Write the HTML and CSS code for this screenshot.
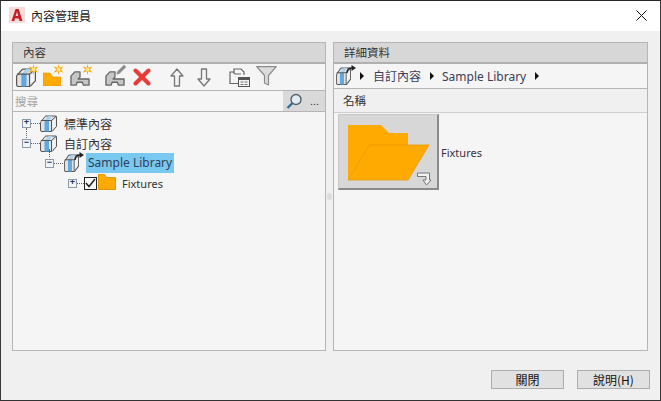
FILE: index.html
```html
<!DOCTYPE html>
<html lang="zh-Hant">
<head>
<meta charset="utf-8">
<title>內容管理員</title>
<link rel="stylesheet" href="styles.css">
</head>
<body>
<svg class="defs" width="0" height="0" aria-hidden="true">
  <symbol id="cube" viewBox="0 0 17 17" preserveAspectRatio="none">
    <path d="M1.500 6 5 1.500Q5.500 1 6 1h9.500q1 0 1 1v9.500L12.500 16q-.5.500-1 .5H2q-1.500 0-1.500-1.500V7.500q0-1 1-1.500z" fill="#e2e2e2" stroke="#555" stroke-width="1"/>
    <path d="M4.500 5.500 8.500 1h4L8.500 5.500z" fill="#a9d2ee"/>
    <path d="M4.500 5.500h4.500v11H4.500z" fill="#5fa8e0"/>
    <path d="M.8 5.500H11.500V16M11.500 5.500 16.200 1.300" fill="none" stroke="#555" stroke-width="1"/>
    <path d="M12.500 6.500 15.500 3.500v7.500l-3 3z" fill="#f4f4f4"/>
  </symbol>
  <symbol id="star" viewBox="0 0 12 12">
    <path d="M6 0 7 4 11.500 2.500 8.500 6 11.500 9.500 7 8 6 12 5 8 .5 9.500 3.500 6 .5 2.500 5 4z" fill="#f9a80c"/>
    <circle cx="6" cy="6" r="2.200" fill="#ffe27a"/>
  </symbol>
  <symbol id="lib" viewBox="0 0 21 16" preserveAspectRatio="none">
    <path d="M1 15V5.500L5 1h5.500v5.500L8.500 8.500H20V15h-6l-1-3H7.500l-1 3z" fill="#c6c6c6" stroke="#666" stroke-width="1.400" stroke-linejoin="round"/>
  </symbol>
</svg>
<div class="window">
  <header class="titlebar">
    <svg class="app-logo" viewBox="0 0 16 16" width="16" height="16" aria-hidden="true">
      <rect width="16" height="16" fill="#f6dcd8"/>
      <path d="M2.500 14 6.500 2h3.200l3.800 12h-3l-.7-2.500H6L5.300 14zM6.700 9h2.500L8 4.800z" fill="#c4202c" fill-rule="evenodd"/>
    </svg>
    <span class="title-text">內容管理員</span>
    <svg class="close-x" viewBox="0 0 11 11" width="11" height="11" aria-hidden="true">
      <path d="M.5.500l10 10M10.500.500l-10 10" stroke="#111" stroke-width="1"/>
    </svg>
  </header>

  <main class="content">
    <section class="panel panel-left">
      <h2 class="panel-head">內容</h2>
      <div class="toolbar">
        <span class="tool tool-cube"><svg width="20" height="19"><use href="#cube"/></svg><svg class="spark" width="11" height="11"><use href="#star"/></svg></span>
        <span class="tool tool-folder">
          <svg width="18" height="15" viewBox="0 0 18 15"><path d="M0 2h7l3 4h8v9H0z" fill="#ffaa00" stroke="#e09400" stroke-width=".6"/></svg><svg class="spark" width="11" height="11"><use href="#star"/></svg></span>
        <span class="tool tool-lib"><svg width="20" height="15"><use href="#lib"/></svg><svg class="spark" width="11" height="11"><use href="#star"/></svg></span>
        <span class="tool tool-edit"><svg width="20" height="15"><use href="#lib"/></svg><svg class="pencil" width="12" height="12" viewBox="0 0 12 12"><path d="M9 .5 11.500 3 4.500 10 1 11 2 7.500z" fill="#8a8a8a" stroke="#f3f3f3" stroke-width=".6"/></svg></span>
        <svg class="tool-del" width="18" height="18" viewBox="0 0 18 18"><path d="M2.500 2.500l13 13M15.500 2.500l-13 13" stroke="#ec3a36" stroke-width="4" stroke-linecap="round"/></svg>
        <svg class="tool-up" width="14" height="19" viewBox="0 0 14 19"><path d="M7 1 13 8H9.500v10h-5V8H1z" fill="#f3f3f3" stroke="#777" stroke-width="1.300" stroke-linejoin="round"/></svg>
        <svg class="tool-down" width="14" height="19" viewBox="0 0 14 19"><path d="M7 18 13 11H9.500V1h-5v10H1z" fill="#f3f3f3" stroke="#777" stroke-width="1.300" stroke-linejoin="round"/></svg>
        <svg class="tool-clip" width="21" height="20" viewBox="0 0 21 20"><path d="M1 17V5h4V2h7l3 3v3M1 5h3l2 2h6" fill="none" stroke="#666" stroke-width="1.200"/><path d="M1 16.500h8" stroke="#666"/><rect x="9.500" y="10.500" width="11" height="9" fill="#f3f3f3" stroke="#555"/><path d="M9.500 12h11" stroke="#555" stroke-width="2"/><path d="M11.500 15h7M11.500 17.500h7" stroke="#777" stroke-dasharray="3 1"/></svg>
        <svg class="tool-filter" width="21" height="20" viewBox="0 0 21 20"><path d="M.7.700h19.600L12.500 9.500v9.500l-4-2V9.500z" fill="#dcdcdc" stroke="#8a8a8a" stroke-width="1.200" stroke-linejoin="round"/></svg>
      </div>
      <div class="searchbar">
        <span class="search-label">搜尋</span>
        <span class="search-btns">
          <svg width="17" height="17" viewBox="0 0 17 17"><circle cx="10" cy="6.500" r="5" fill="#e4ecf2" stroke="#54606a" stroke-width="1.400"/><path d="M6.500 10 1.500 15" stroke="#2f6f9f" stroke-width="2.400"/></svg>
          <span class="dots">...</span>
        </span>
      </div>
      <div class="tree">
        <div class="row row-0 row-next">
          <span class="exp">+</span><span class="dash"></span>
          <svg class="node-ico" width="17" height="17"><use href="#cube"/></svg>
          <span class="label">標準內容</span>
        </div>
        <div class="row row-0 row-open">
          <span class="exp">−</span><span class="dash"></span>
          <svg class="node-ico" width="17" height="17"><use href="#cube"/></svg>
          <span class="label">自訂內容</span>
        </div>
        <div class="row row-1">
          <span class="exp">−</span><span class="dash"></span>
          <span class="lib-ico"><svg class="node-ico" width="15" height="18"><use href="#cube"/></svg><svg class="link-arrow" width="10" height="9" viewBox="0 0 10 9"><path d="M1 8C1 4 3 3 6 3" fill="none" stroke="#222" stroke-width="1.400"/><path d="M5.500 0 10 3 5.500 6z" fill="#222"/></svg></span>
          <span class="label label-sel">Sample Library</span>
        </div>
        <div class="row row-2">
          <span class="exp">+</span><span class="dash"></span>
          <span class="check"><svg width="11" height="10" viewBox="0 0 11 10"><path d="M1 5 4 8.500 10 1" fill="none" stroke="#222" stroke-width="1.500"/></svg></span>
          <svg class="fold-ico" width="18" height="16" viewBox="0 0 18 16"><path d="M.5.500h6l2 3h9v12H.5z" fill="#ffaa00" stroke="#e29600"/></svg>
          <span class="label label-fix">Fixtures</span>
        </div>
      </div>
    </section>

    <div class="splitter"><span class="grip"></span></div>

    <section class="panel panel-right">
      <h2 class="panel-head">詳細資料</h2>
      <nav class="crumbs">
        <span class="lib-ico crumb-ico"><svg class="node-ico" width="15" height="18"><use href="#cube"/></svg><svg class="link-arrow" width="10" height="9" viewBox="0 0 10 9"><path d="M1 8C1 4 3 3 6 3" fill="none" stroke="#222" stroke-width="1.400"/><path d="M5.500 0 10 3 5.500 6z" fill="#222"/></svg></span>
        <span class="tri"></span>
        <span class="crumb">自訂內容</span>
        <span class="tri"></span>
        <span class="crumb">Sample Library</span>
        <span class="tri"></span>
      </nav>
      <div class="col-head">名稱</div>
      <div class="items">
        <div class="thumb">
          <svg width="82" height="57" viewBox="0 0 82 57"><path d="M1 1h33l8 8h19v12H23L1 55.500z" fill="#ffaa00"/><path d="M22.500 21H82L61 56H1z" fill="#ffaa00" stroke="#e89a00" stroke-width=".8"/></svg>
          <svg class="shortcut" width="14" height="14" viewBox="0 0 14 14"><path d="M.5 1h12v7H14L9.500 13 6 8h3V4.500H.5z" fill="#f2f2f2" stroke="#777"/></svg>
        </div>
        <span class="item-name">Fixtures</span>
      </div>
    </section>
  </main>

  <footer class="footer">
    <button class="btn" type="button">關閉</button>
    <button class="btn" type="button">說明(H)</button>
  </footer>
</div>
</body>
</html>
```
FILE: styles.css
```css
* { box-sizing: border-box; }
html, body { margin: 0; padding: 0; }
body {
  width: 661px;
  height: 401px;
  overflow: hidden;
  background: #fff;
  font-family: "Noto Sans CJK TC", "Noto Sans", sans-serif;
  font-size: 12px;
  color: #333;
}
.defs { position: absolute; }
.window {
  width: 661px;
  height: 401px;
  display: flex;
  flex-direction: column;
  background: #f0f0f0;
  border-top: 1px solid #262626;
  border-left: 1px solid #3a3a3a;
  border-right: 1px solid #3a3a3a;
  border-bottom: 1px solid #333;
}
.titlebar {
  height: 30px;
  flex: none;
  background: #fff;
  display: flex;
  align-items: center;
  padding: 0 11px 1px 8px;
}
.app-logo { flex: none; margin-top: -1px; }
.title-text { margin-left: 6px; font-size: 12px; color: #222; }
.close-x { margin-left: auto; margin-right: 2px; }

.content {
  flex: none;
  height: 320px;
  display: flex;
  padding: 11px 12px 0 11px;
}
.panel {
  height: 309px;
  display: flex;
  flex-direction: column;
  background: #f5f5f5;
  border: 1px solid #b5b5b5;
}
.panel-left { width: 314px; }
.panel-right { width: 315px; }
.splitter { width: 7px; height: 309px; display: flex; align-items: center; justify-content: center; }
.grip { width: 5px; height: 7px; background: #dcdcdc; border-radius: 2px; }
.panel-head {
  margin: 0;
  height: 21px;
  padding-left: 10px;
  background: #d7d7d7;
  border-bottom: 2px solid #b0b0b0;
  font-size: 11.500px;
  line-height: 19px;
  font-weight: 400;
  color: #333;
}

.toolbar {
  height: 27px;
  display: flex;
  align-items: center;
  padding-left: 3px;
  border-bottom: 1px solid #b5b5b5;
  flex: none;
}
.tool { position: relative; display: block; width: 20px; height: 20px; }
.tool svg { display: block; }
.tool .spark { position: absolute; top: -3px; right: -3px; }
.tool-cube { padding-top: 1px; }
.tool-folder { margin-left: 7px; padding-top: 4px; width: 18px; }
.tool-lib { margin-left: 9px; padding-top: 4px; }
.tool-edit { margin-left: 15px; padding-top: 4px; }
.tool .pencil { position: absolute; top: -3px; right: -2px; }
.tool-del { margin-left: 8px; }
.tool-up { margin-left: 19px; }
.tool-down { margin-left: 13px; }
.tool-clip { margin-left: 18px; }
.tool-filter { margin-left: 6px; margin-top: -3px; }

.searchbar {
  height: 21px;
  flex: none;
  display: flex;
  align-items: center;
  justify-content: space-between;
  border-bottom: 1px solid #b5b5b5;
  padding-left: 2px;
}
.search-label { font-size: 11.500px; color: #a3a3a3; }
.search-btns {
  width: 42px;
  height: 20px;
  background: #d9d9d9;
  display: flex;
  align-items: center;
  padding-left: 3px;
}
.dots { margin-left: 7px; font-family: "Liberation Sans", sans-serif; font-size: 11px; color: #333; line-height: 14px; }

.tree { flex: 1; padding-top: 1px; display: flex; flex-direction: column; }
.row { height: 20px; display: flex; align-items: center; position: relative; }
.row-0 { padding-left: 9px; }
.row-1 { padding-left: 32px; }
.row-2 { padding-left: 55px; }
.exp {
  width: 9px;
  height: 9px;
  flex: none;
  border: 1px solid #8f9aa8;
  background: #f2f4f6;
  color: #223a66;
  font: 700 9px/7px "Liberation Mono", monospace;
  text-align: center;
  overflow: hidden;
}
.dash { width: 9px; flex: none; border-top: 1px dotted #666; }
.node-ico { display: block; flex: none; }
.label { margin-left: 7px; font-size: 12px; color: #333; white-space: nowrap; }
.label-sel {
  margin-left: 3px;
  background: #78c8f0;
  color: #2f3f58;
  height: 20px;
  line-height: 19px;
  padding: 0 2px;
  font-family: "Noto Sans", sans-serif;
  font-size: 12px;
}
.label-fix { margin-left: 6px; font-family: "Noto Sans", sans-serif; font-size: 11px; }
.row-next::after {
  content: "";
  position: absolute;
  left: 13px;
  top: 15px;
  height: 10px;
  border-left: 1px dotted #666;
}
.row-open::after {
  content: "";
  position: absolute;
  left: 36px;
  top: 16px;
  height: 8px;
  border-left: 1px dotted #666;
}
.lib-ico { position: relative; display: block; width: 19px; height: 18px; flex: none; margin-left: 1px; }
.link-arrow { position: absolute; top: -2px; right: -1px; }
.check {
  width: 13px;
  height: 13px;
  flex: none;
  margin-left: -2px;
  border: 1px solid #222;
  background: #f8f8f8;
  display: flex;
  align-items: center;
  justify-content: center;
}
.fold-ico { margin-left: 1px; flex: none; margin-top: -2px; }

.crumbs {
  height: 25px;
  flex: none;
  display: flex;
  align-items: center;
  padding-left: 1px;
  border-bottom: 1px solid #b5b5b5;
  background: #f5f5f5;
}
.crumb-ico { width: 19px; }
.tri {
  width: 0;
  height: 0;
  margin: 0 8px 0 9px;
  border-left: 4px solid #111;
  border-top: 4px solid transparent;
  border-bottom: 4px solid transparent;
}
.crumb-ico + .tri { margin-left: 5px; margin-right: 9px; }
.crumb { font-size: 12px; color: #3d3d55; white-space: nowrap; font-family: "Noto Sans", "Noto Sans CJK TC", sans-serif; }
.col-head {
  height: 24px;
  flex: none;
  padding-left: 9px;
  line-height: 22px;
  font-size: 11.500px;
  background: #f0f0f0;
  border-bottom: 1px solid #cfcfcf;
}
.items { padding: 1px 0 0 4px; display: flex; align-items: center; height: 77px; flex: none; }
.thumb {
  position: relative;
  width: 101px;
  height: 76px;
  flex: none;
  background: #d7d7d7;
  border: 1px solid #c8c8c8;
  border-right: 2px solid #8a8a8a;
  border-bottom: 2px solid #8a8a8a;
  padding: 9px 0 0 8px;
}
.thumb svg { display: block; }
.thumb .shortcut { position: absolute; right: 6px; bottom: 2px; }
.item-name { margin-left: 2px; font-family: "Noto Sans", sans-serif; font-size: 11px; color: #3a3040; }

.footer {
  flex: 1;
  display: flex;
  justify-content: flex-end;
  gap: 13px;
  padding: 19px 10px 0 0;
}
.btn {
  width: 73px;
  height: 19px;
  padding: 0;
  background: #e1e1e1;
  border: 1px solid #adadad;
  border-radius: 0;
  font-family: "Noto Sans CJK TC", sans-serif;
  font-size: 12px;
  line-height: 16px;
  color: #111;
}
```
